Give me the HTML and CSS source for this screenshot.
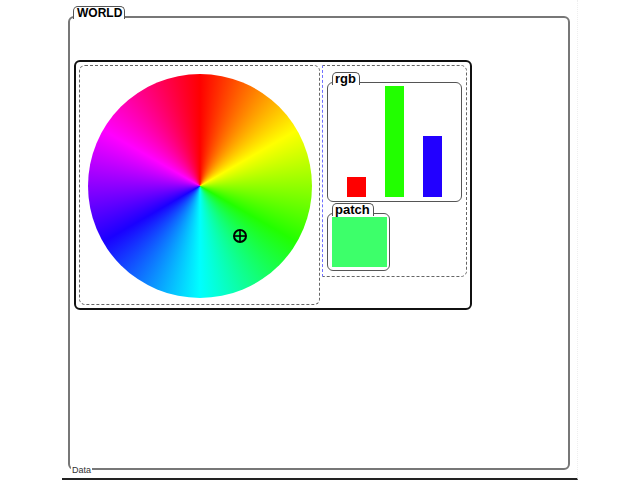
FILE: index.html
```html
<!DOCTYPE html>
<html>
<head>
<meta charset="utf-8">
<link rel="stylesheet" href="styles.css">
</head>
<body>
<div class="screen">
  <div class="world">
    <span class="tab tab-world">WORLD</span>
    <div class="panel">
      <div class="wheel-pane">
        <div class="wheel">
          <svg class="cross" width="16" height="16" viewBox="0 0 16 16">
            <circle cx="8" cy="8" r="6" fill="none" stroke="#000" stroke-width="2"/>
            <line x1="8" y1="2" x2="8" y2="14" stroke="#000" stroke-width="1.6"/>
            <line x1="2" y1="8" x2="14" y2="8" stroke="#000" stroke-width="1.6"/>
          </svg>
        </div>
      </div>
      <div class="side">
        <div class="box rgb">
          <span class="tab tab-small">rgb</span>
          <div class="bar red" style="height:20px"></div>
          <div class="bar green" style="height:111px"></div>
          <div class="bar blue" style="height:61px"></div>
        </div>
        <div class="box patch">
          <span class="tab tab-small">patch</span>
          <div class="swatch"></div>
        </div>
      </div>
    </div>
    <span class="data">Data</span>
  </div>
</div>
</body>
</html>
```

FILE: styles.css
```css
html, body {
  margin: 0;
  padding: 0;
  background: #fff;
}
body {
  width: 640px;
  height: 480px;
  font-family: "Liberation Sans", Arial, sans-serif;
}
.screen {
  box-sizing: border-box;
  margin-left: 62px;
  width: 516px;
  height: 480px;
  padding: 16px 0 0 6px;
  border-bottom: 2px solid #222;
  border-right: 1px dotted #eee;
}
.world {
  position: relative;
  box-sizing: border-box;
  width: 502px;
  height: 454px;
  border: 2px solid #777;
  border-radius: 6px;
  padding: 42px 0 0 4px;
}
.tab {
  position: absolute;
  background: #fff;
  border: 1px solid #555;
  border-bottom: none;
  border-radius: 5px 5px 0 0;
  font-weight: bold;
  color: #000;
  line-height: 12px;
  padding: 0 3px;
}
.tab-world {
  top: -12px;
  left: 3px;
  font-size: 12px;
  padding: 0 2px 0 3px;
}
.tab-small {
  top: -11px;
  left: 4px;
  font-size: 13px;
  line-height: 12px;
  padding: 0 3px 0 2px;
}
.panel {
  box-sizing: border-box;
  width: 398px;
  height: 250px;
  border: 2px solid #111;
  border-radius: 6px;
  padding: 3px;
  display: flex;
  align-items: flex-start;
  gap: 2px;
}
.wheel-pane {
  box-sizing: border-box;
  width: 241px;
  height: 240px;
  border: 1px dashed #666;
  border-radius: 6px;
  padding: 8px;
}
.wheel {
  position: relative;
  width: 224px;
  height: 224px;
  border-radius: 50%;
  background: conic-gradient(from 0deg, #ff0000, #ffff00, #22ff00, #00ffff, #1a00ff, #ff00ff, #ff0000);
}
.cross {
  position: absolute;
  left: 144px;
  top: 154px;
}
.side {
  box-sizing: border-box;
  width: 145px;
  height: 212px;
  border: 1px dashed #666;
  border-left: 1px dashed #7070ff;
  border-radius: 0 6px 6px 0;
  padding: 16px 0 0 4px;
  display: flex;
  flex-direction: column;
  align-items: flex-start;
}
.box {
  position: relative;
  box-sizing: border-box;
  border: 1px solid #555;
  border-radius: 6px;
}
.rgb {
  width: 135px;
  height: 120px;
  display: flex;
  align-items: flex-end;
  gap: 19px;
  padding: 0 0 4px 19px;
}
.bar {
  width: 19px;
}
.red { background: #ff0000; }
.green { background: #22ff00; }
.blue { background: #2200ff; }
.patch {
  margin-top: 11px;
  width: 63px;
  height: 58px;
  padding: 3px 0 0 4px;
}
.swatch {
  width: 55px;
  height: 50px;
  background: #3dff6a;
}
.data {
  position: absolute;
  left: 1px;
  bottom: -7px;
  background: #fff;
  font-size: 9px;
  line-height: 10px;
  color: #333;
  padding: 0 1px;
}
```
